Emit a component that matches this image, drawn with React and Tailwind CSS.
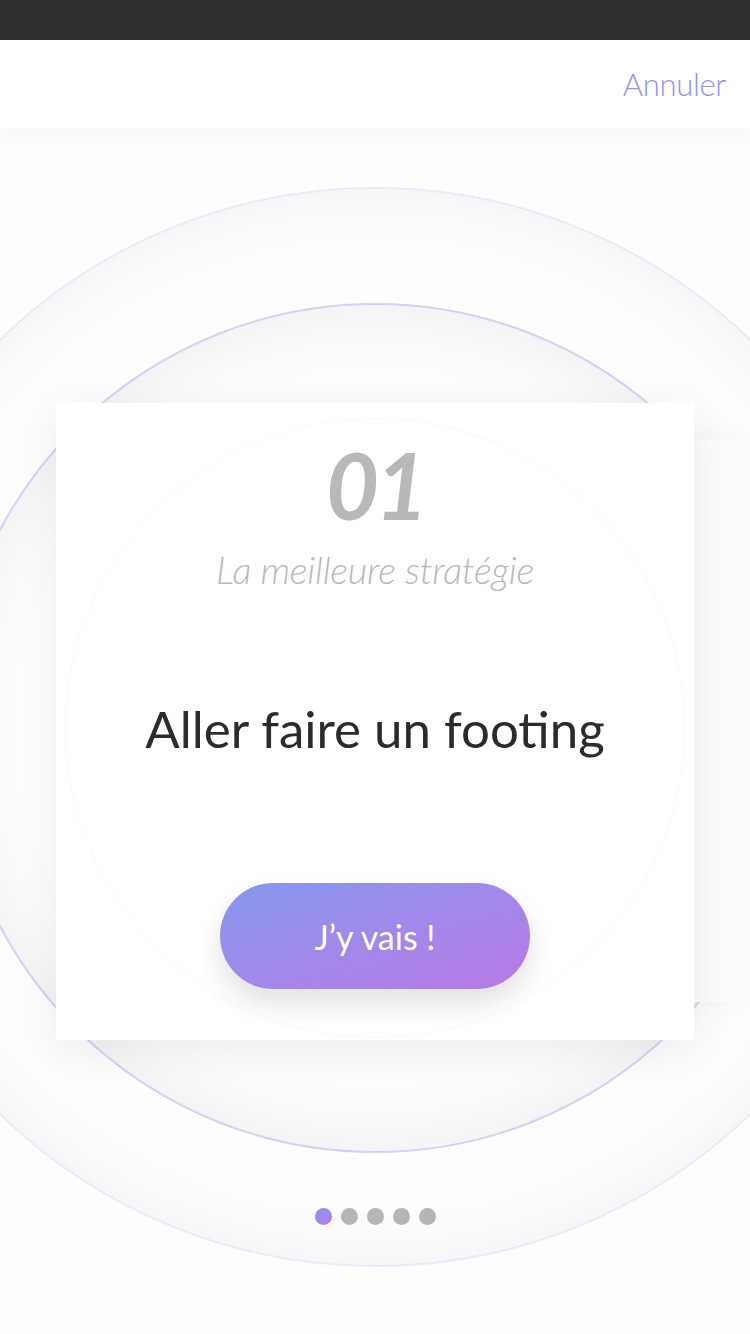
const DOTS = [0, 1, 2, 3, 4];

export default function App() {
  return (
    <div className="relative w-[750px] h-[1334px] overflow-hidden bg-[#fdfdfd] flex flex-col" style={{ fontFamily: "Lato, 'Noto Sans', sans-serif" }}>
      <div className="h-[40px] bg-[#303030] shrink-0" />
      <header className="relative z-20 h-[88px] shrink-0 bg-white flex items-center justify-end pr-6 shadow-[0_6px_24px_rgba(0,0,0,0.03)]">
        <button className="text-[31px] font-light text-[#8b95ef] tracking-[-0.3px]">Annuler</button>
      </header>

      <main className="relative flex-1">
        {/* fond : cercles décoratifs */}
        <div className="absolute left-[-165px] top-[59px] w-[1080px] h-[1080px] rounded-full border-2 border-[#e8e9fb] shadow-[inset_0_0_70px_rgba(0,0,0,0.05)]" />
        <div className="absolute left-[-50px] top-[175px] w-[850px] h-[850px] rounded-full border-2 border-[#cfd2f6] shadow-[inset_0_0_80px_rgba(0,0,0,0.07)]" />

        <div className="relative z-10 flex flex-col items-center pt-[275px]">
          <div className="relative w-full flex justify-center">
            {/* carte suivante */}
            <div className="absolute right-0 top-[37px] w-[56px] h-[562px] bg-[#fcfcfc] shadow-[-10px_0_30px_rgba(0,0,0,0.05)]" />

            <div className="relative w-[638px] h-[637px] bg-white shadow-[0_10px_40px_rgba(0,0,0,0.07)] flex flex-col items-center overflow-hidden">
              <div className="absolute left-[9px] top-[15px] w-[620px] h-[620px] rounded-full border border-[#f9f9fa]" />
              <div className="relative mt-[32px] text-[92px] leading-[100px] font-bold italic text-[#b8b8b8] tracking-[-4px]">01</div>
              <div className="relative mt-[12px] text-[38px] leading-[44px] font-light italic text-[#b9b9b9] tracking-[-0.3px]">La meilleure stratégie</div>
              <div className="relative mt-[108px] text-[51px] leading-[60px] text-[#2b2b2b]">Aller faire un footing</div>
              <button className="relative mt-[124px] w-[310px] h-[106px] rounded-full bg-gradient-to-br from-[#8497ee] to-[#b878e6] text-white text-[34px] font-normal shadow-[0_14px_28px_rgba(0,0,0,0.12)]">
                J’y vais !
              </button>
            </div>
          </div>

          <div className="mt-[168px] flex gap-[9px]">
            {DOTS.map((d) => (
              <span
                key={d}
                className={d === 0 ? "w-[17px] h-[17px] rounded-full bg-gradient-to-br from-[#8497ee] to-[#b878e6]" : "w-[17px] h-[17px] rounded-full bg-[#b5b5b5]"}
              />
            ))}
          </div>
        </div>
      </main>
    </div>
  );
}
